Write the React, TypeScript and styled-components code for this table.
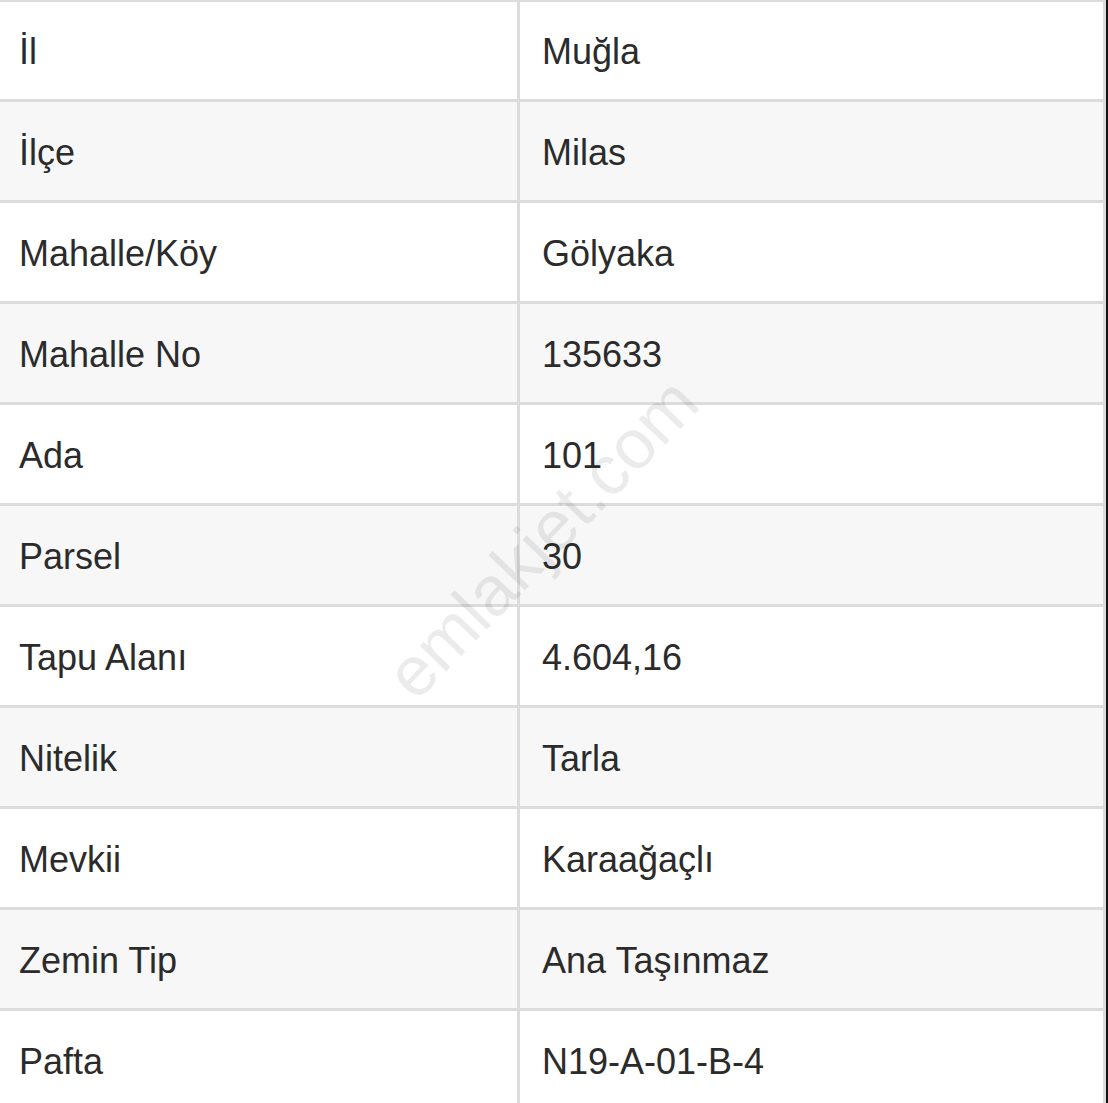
import React from "react";
import styled, { createGlobalStyle } from "styled-components";

const GlobalStyle = createGlobalStyle`
  html, body {
    margin: 0;
    padding: 0;
    background: #ffffff;
  }
  body {
    font-family: "Liberation Sans", Arial, Helvetica, sans-serif;
    overflow: hidden;
  }
`;

const Frame = styled.div`
  position: relative;
  width: 1108px;
  height: 1103px;
  overflow: hidden;
  box-sizing: border-box;
  border-right: 2px solid #141414;
`;

const Table = styled.div`
  display: flex;
  flex-direction: column;
  width: 1106px;
  box-sizing: border-box;
  border-top: 2px solid #dcdcdc;
  border-right: 3px solid #dcdcdc;
`;

const Row = styled.div<{ $alt: boolean }>`
  display: grid;
  grid-template-columns: 520px 1fr;
  height: 101px;
  flex: none;
  box-sizing: border-box;
  border-bottom: 3px solid #dcdcdc;
  background: ${(p) => (p.$alt ? "#f7f7f7" : "#ffffff")};
  &:first-child {
    height: 100px;
  }
`;

const Cell = styled.div<{ $label?: boolean }>`
  display: flex;
  align-items: center;
  box-sizing: border-box;
  padding-top: 3px;
  padding-left: ${(p) => (p.$label ? "19px" : "22px")};
  border-right: ${(p) => (p.$label ? "3px solid #dcdcdc" : "none")};
  font-size: 36px;
  color: #2b2b2b;
  white-space: nowrap;
`;

const Watermark = styled.div`
  position: absolute;
  left: 542px;
  top: 538px;
  transform: translate(-50%, -50%) rotate(-46deg);
  font-family: "Liberation Sans", Arial, sans-serif;
  font-size: 70px;
  color: rgba(0, 0, 0, 0.08);
  white-space: nowrap;
  pointer-events: none;
`;

const rows: [string, string][] = [
  ["İl", "Muğla"],
  ["İlçe", "Milas"],
  ["Mahalle/Köy", "Gölyaka"],
  ["Mahalle No", "135633"],
  ["Ada", "101"],
  ["Parsel", "30"],
  ["Tapu Alanı", "4.604,16"],
  ["Nitelik", "Tarla"],
  ["Mevkii", "Karaağaçlı"],
  ["Zemin Tip", "Ana Taşınmaz"],
  ["Pafta", "N19-A-01-B-4"],
];

export default function App() {
  return (
    <>
      <GlobalStyle />
      <Frame>
        <Table>
          {rows.map(([k, v], i) => (
            <Row key={k} $alt={i % 2 === 1}>
              <Cell $label>{k}</Cell>
              <Cell>{v}</Cell>
            </Row>
          ))}
        </Table>
        <Watermark>emlakjet.com</Watermark>
      </Frame>
    </>
  );
}
